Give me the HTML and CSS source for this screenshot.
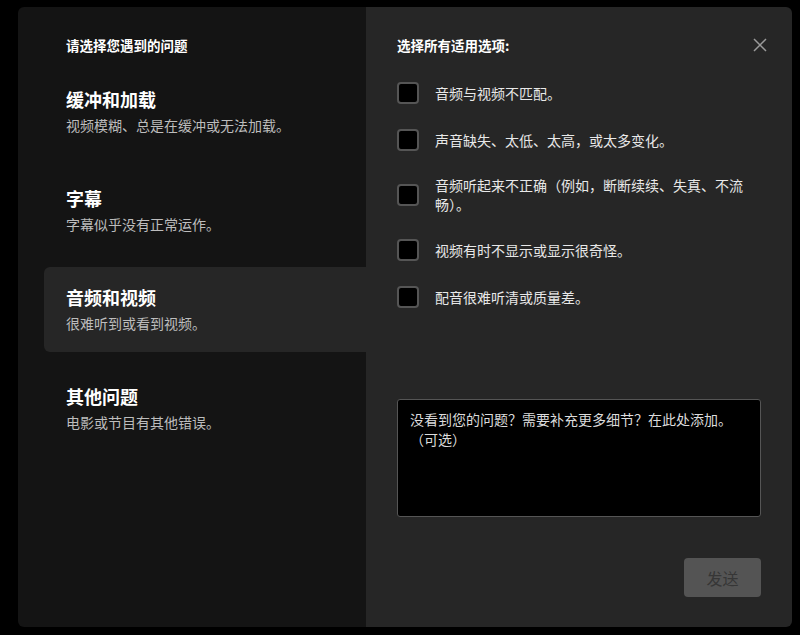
FILE: index.html
```html
<!DOCTYPE html>
<html lang="zh-CN">
<head>
    <meta charset="UTF-8">
    <meta name="viewport" content="width=device-width, initial-scale=1.0">
    <title>报告问题</title>
    <link rel="stylesheet" href="styles.css">
</head>
<body>
    <div class="report-dialog">
        <aside class="category-panel">
            <h3 class="panel-title">请选择您遇到的问题</h3>
            <ul class="category-list">
                <li class="category">
                    <h4>缓冲和加载</h4>
                    <p>视频模糊、总是在缓冲或无法加载。</p>
                </li>
                <li class="category">
                    <h4>字幕</h4>
                    <p>字幕似乎没有正常运作。</p>
                </li>
                <li class="category active">
                    <h4>音频和视频</h4>
                    <p>很难听到或看到视频。</p>
                </li>
                <li class="category">
                    <h4>其他问题</h4>
                    <p>电影或节目有其他错误。</p>
                </li>
            </ul>
        </aside>

        <section class="options-panel">
            <button class="close-btn" aria-label="关闭">
                <svg width="14" height="14" viewBox="0 0 14 14">
                    <path d="M1 1 L13 13 M13 1 L1 13" stroke="#9a9a9a" stroke-width="1.5" fill="none"/>
                </svg>
            </button>
            <h3 class="panel-title">选择所有适用选项:</h3>

            <div class="option-list">
                <label class="option"><input type="checkbox"><span>音频与视频不匹配。</span></label>
                <label class="option"><input type="checkbox"><span>声音缺失、太低、太高，或太多变化。</span></label>
                <label class="option"><input type="checkbox"><span>音频听起来不正确（例如，断断续续、失真、不流畅）。</span></label>
                <label class="option"><input type="checkbox"><span>视频有时不显示或显示很奇怪。</span></label>
                <label class="option"><input type="checkbox"><span>配音很难听清或质量差。</span></label>
            </div>

            <textarea class="details" placeholder="没看到您的问题？需要补充更多细节？在此处添加。（可选）"></textarea>

            <div class="actions">
                <button class="send-btn" disabled>发送</button>
            </div>
        </section>
    </div>
</body>
</html>
```

FILE: styles.css
```css
:root {
    --bg-page: #000;
    --bg-left: #141414;
    --bg-right: #262626;
    --text-main: #ffffff;
    --text-soft: #bdbdbd;
    --text-option: #e8e8e8;
    --border: #555;
}

* {
    margin: 0;
    padding: 0;
    box-sizing: border-box;
}

body {
    background: var(--bg-page);
    font-family: "Noto Sans CJK SC", "Noto Sans", sans-serif;
    color: var(--text-main);
}

.report-dialog {
    display: flex;
    width: 774px;
    height: 620px;
    margin: 7px 0 0 18px;
    border-radius: 6px;
    overflow: hidden;
}

.panel-title {
    font-size: 13.5px;
    line-height: 20px;
    font-weight: 700;
    color: var(--text-main);
}

/* left column */
.category-panel {
    width: 348px;
    background: var(--bg-left);
    padding: 28px 0 0 26px;
}

.category-panel .panel-title {
    margin-left: 22px;
}

.category-list {
    list-style: none;
    margin-top: 14px;
}

.category {
    height: 85px;
    padding: 18px 22px 0;
    margin-bottom: 14px;
    border-radius: 6px 0 0 6px;
}

.category.active {
    background: var(--bg-right);
}

.category h4 {
    font-size: 18px;
    line-height: 24px;
    font-weight: 700;
}

.category p {
    margin-top: 4px;
    font-size: 14px;
    line-height: 20px;
    color: var(--text-soft);
}

/* right column */
.options-panel {
    position: relative;
    flex: 1;
    display: flex;
    flex-direction: column;
    background: var(--bg-right);
    padding: 28px 31px 0 31px;
}

.close-btn {
    position: absolute;
    top: 31px;
    right: 25px;
    width: 14px;
    height: 14px;
    background: none;
    border: none;
    cursor: pointer;
}

.close-btn svg {
    display: block;
}

.option-list {
    display: flex;
    flex-direction: column;
    gap: 25px;
    margin-top: 27px;
}

.option {
    display: flex;
    align-items: center;
    gap: 16px;
    cursor: pointer;
}

.option input {
    appearance: none;
    flex: none;
    width: 22px;
    height: 22px;
    background: #000;
    border: 2px solid var(--border);
    border-radius: 4px;
}

.option span {
    max-width: 315px;
    font-size: 14px;
    line-height: 19px;
    color: var(--text-option);
}

.details {
    display: block;
    width: 100%;
    height: 118px;
    margin-top: 91px;
    padding: 9px 12px;
    background: #000;
    border: 1px solid var(--border);
    border-radius: 3px;
    resize: none;
    font-family: inherit;
    font-size: 14px;
    line-height: 20px;
    color: var(--text-main);
}

.details::placeholder {
    color: #dcdcdc;
    opacity: 1;
}

.actions {
    display: flex;
    justify-content: flex-end;
    margin-top: 41px;
}

.send-btn {
    width: 77px;
    height: 39px;
    background: #545454;
    border: none;
    border-radius: 4px;
    font-family: inherit;
    font-size: 16px;
    color: #363636;
}
```
